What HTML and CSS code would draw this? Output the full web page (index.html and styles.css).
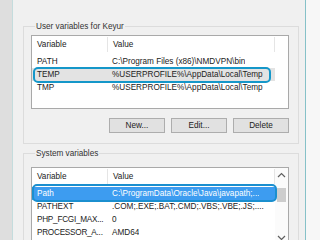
FILE: index.html
```html
<!DOCTYPE html>
<html lang="en">

<head>
    <meta charset="UTF-8">
    <title>Environment Variables</title>
    <link rel="stylesheet" href="styles.css">
</head>

<body>
    <div class="side-left"></div>

    <div class="window">
        <fieldset class="group">
            <legend>User variables for Keyur</legend>
            <div class="list user-list">
                <div class="list-head">
                    <span class="col-name">Variable</span>
                    <span class="col-value">Value</span>
                </div>
                <div class="rows">
                    <div class="row"><span class="col-name">PATH</span><span class="col-value">C:\Program Files (x86)\NMDVPN\bin</span></div>
                    <div class="row selected-gray"><span class="col-name">TEMP</span><span class="col-value">%USERPROFILE%\AppData\Local\Temp</span>
                        <span class="mark"></span>
                    </div>
                    <div class="row"><span class="col-name">TMP</span><span class="col-value">%USERPROFILE%\AppData\Local\Temp</span></div>
                </div>
            </div>
            <div class="buttons">
                <button class="btn">New...</button>
                <button class="btn">Edit...</button>
                <button class="btn">Delete</button>
            </div>
        </fieldset>

        <fieldset class="group sys-group">
            <legend>System variables</legend>
            <div class="list sys-list">
                <div class="list-main">
                    <div class="list-head">
                        <span class="col-name">Variable</span>
                        <span class="col-value">Value</span>
                    </div>
                    <div class="rows">
                        <div class="row selected-blue"><span class="col-name">Path</span><span class="col-value">C:\ProgramData\Oracle\Java\javapath;...</span>
                            <span class="mark"></span>
                        </div>
                        <div class="row"><span class="col-name">PATHEXT</span><span class="col-value">.COM;.EXE;.BAT;.CMD;.VBS;.VBE;.JS;....</span></div>
                        <div class="row"><span class="col-name tight">PHP_FCGI_MAX...</span><span class="col-value">0</span></div>
                        <div class="row"><span class="col-name tight">PROCESSOR_A...</span><span class="col-value">AMD64</span></div>
                    </div>
                </div>
                <div class="scrollbar">
                    <svg class="arrow" width="9" height="6" viewBox="0 0 9 6"><path d="M1 5 L4.5 1.5 L8 5" fill="none" stroke="#606060" stroke-width="1.2"/></svg>
                    <div class="thumb"></div>
                    <svg class="arrow arrow-down" width="9" height="6" viewBox="0 0 9 6"><path d="M1 1 L4.5 4.5 L8 1" fill="none" stroke="#606060" stroke-width="1.2"/></svg>
                </div>
            </div>
        </fieldset>
    </div>

    <div class="side-right"></div>
</body>

</html>
```

FILE: styles.css
```css
body {
    margin: 0;
    height: 240px;
    overflow: hidden;
    display: flex;
    font-family: 'Liberation Sans', Arial, sans-serif;
    font-size: 8.2px;
    color: #222;
    background: #f0f0f0;
}

.side-left {
    width: 12px;
    background: #dedede;
    border-right: 1px solid #c4dcdd;
}

.window {
    width: 276px;
    padding: 21px 6px 0 10px;
    background: #f0f0f0;
    border-right: 1px solid #86c1c8;
    display: flex;
    flex-direction: column;
    gap: 4px;
}

.side-right {
    flex: 1;
    background: #f7f7f7;
}

.group {
    margin: 0;
    padding: 3px 9px 10px 7px;
    border: 1px solid #dcdcdc;
    min-width: 0;
}

.sys-group {
    padding-top: 8px;
}

.group legend {
    padding: 0 1px;
    margin-left: 4px;
    line-height: 11px;
    color: #333;
}

.list {
    background: #fff;
    border: 1px solid #a9a9a9;
    height: 72px;
    overflow: hidden;
}

.sys-list {
    height: 90px;
    display: flex;
}

.list-main {
    flex: 1;
    min-width: 0;
}

.list-head {
    display: flex;
    height: 17px;
    align-items: center;
}

.list-head .col-name {
    border-right: 1px solid #e5e5e5;
    height: 15px;
    line-height: 15px;
}

.list-head .col-value {
    border-right: 1px solid #e5e5e5;
    width: 161px;
    flex: none;
    height: 15px;
    line-height: 15px;
}

.rows {
    padding-top: 2px;
}

.row {
    display: flex;
    height: 13px;
    line-height: 13px;
    position: relative;
    white-space: nowrap;
}

.col-name {
    width: 70px;
    padding-left: 5px;
    flex: none;
    overflow: hidden;
}

.tight {
    letter-spacing: -0.25px;
}

.col-value {
    padding-left: 5px;
    overflow: hidden;
}

.selected-gray {
    background: #e3e3e3;
    margin-right: 13px;
}

.selected-blue {
    background: #3d9cf0;
    color: #fff;
}

.mark {
    position: absolute;
    left: 1px;
    right: 4px;
    top: -1px;
    bottom: -2px;
    border: 2px solid #1597c9;
    border-radius: 5px;
}

.selected-blue .mark {
    left: 0;
    right: -2px;
    top: -3px;
    bottom: -2px;
    border-color: #1b8fcf;
}

.scrollbar {
    width: 13px;
    background: #fbfbfb;
    display: flex;
    flex-direction: column;
    align-items: center;
    padding-top: 4px;
}

.thumb {
    width: 9px;
    height: 14px;
    margin-top: 10px;
    background: #cdcdcd;
}

.arrow-down {
    margin-top: 33px;
}

.buttons {
    display: flex;
    justify-content: flex-end;
    gap: 6px;
    margin-top: 9px;
}

.btn {
    width: 56px;
    height: 15px;
    padding: 0;
    font-family: inherit;
    font-size: 8.2px;
    color: #222;
    background: #e1e1e1;
    border: 1px solid #adadad;
    border-radius: 0;
}
```
